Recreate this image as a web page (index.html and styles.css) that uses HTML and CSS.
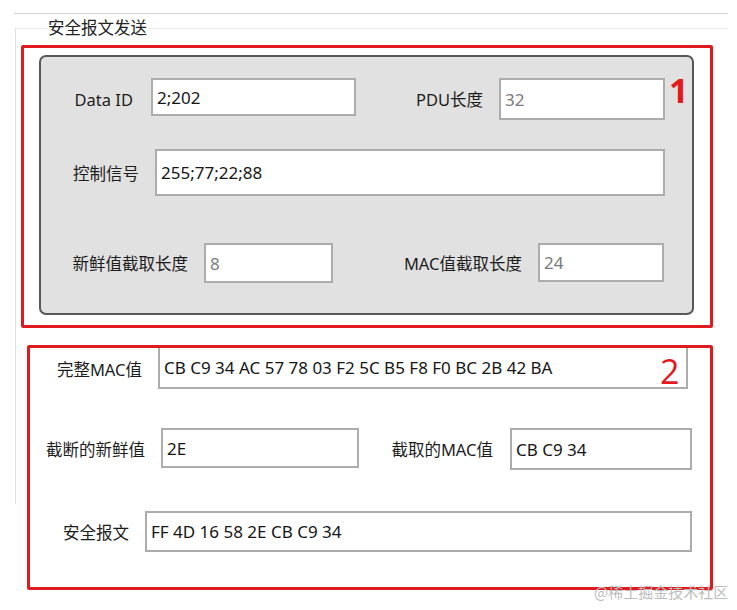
FILE: index.html
```html
<!DOCTYPE html>
<html lang="zh-CN">
<head>
<meta charset="utf-8">
<title>安全报文发送</title>
<link rel="stylesheet" href="styles.css">
</head>
<body>
<div class="topline"></div>
<div class="group">
  <div class="group-title">安全报文发送</div>
  <div class="redbox box1">
    <div class="panel">
      <div class="row r1">
        <div class="lbl w-dataid">Data ID</div>
        <div class="tb tb-dataid">2;202</div>
        <div class="lbl w-pdu">PDU长度</div>
        <div class="tb tb-pdu dim">32</div>
      </div>
      <div class="row r2">
        <div class="lbl w-ctrl">控制信号</div>
        <div class="tb tb-ctrl">255;77;22;88</div>
      </div>
      <div class="row r3">
        <div class="lbl w-fresh">新鲜值截取长度</div>
        <div class="tb tb-fresh dim">8</div>
        <div class="lbl w-maclen">MAC值截取长度</div>
        <div class="tb tb-maclen dim">24</div>
      </div>
    </div>
    <span class="mark mark1">1</span>
  </div>
  <div class="redbox box2">
    <div class="row ra">
      <div class="lbl w-fullmac">完整MAC值</div>
      <div class="tb tb-fullmac">CB C9 34 AC 57 78 03 F2 5C B5 F8 F0 BC 2B 42 BA</div>
    </div>
    <div class="row rb">
      <div class="lbl w-trfresh">截断的新鲜值</div>
      <div class="tb tb-trfresh">2E</div>
      <div class="lbl w-trmac">截取的MAC值</div>
      <div class="tb tb-trmac">CB C9 34</div>
    </div>
    <div class="row rc">
      <div class="lbl w-secmsg">安全报文</div>
      <div class="tb tb-secmsg">FF 4D 16 58 2E CB C9 34</div>
    </div>
    <span class="mark mark2">2</span>
  </div>
</div>
<div class="watermark">@稀土掘金技术社区</div>
</body>
</html>
```
FILE: styles.css
```css
* { box-sizing: border-box; }
html, body { margin: 0; padding: 0; background: #ffffff; }
body {
  width: 737px;
  height: 610px;
  position: relative;
  overflow: hidden;
  font-family: "Noto Sans", "Noto Sans CJK SC", sans-serif;
  font-size: 16px;
  color: #1a1a1a;
}
.topline {
  margin: 13px 0 0 14px;
  width: 714px;
  height: 1px;
  background: #d2d2d2;
}
.group {
  margin: 14px 0 0 15px;
  width: 713px;
  height: 476px;
  border-top: 1px solid #ebebeb;
  border-left: 1px solid #e0e0e0;
}
.group-title {
  display: block;
  width: max-content;
  margin: -11px 0 0 31px;
  padding: 0 1px;
  height: 18px;
  line-height: 18px;
  background: #fff;
  font-family: "Noto Sans CJK SC", sans-serif;
  font-size: 16.5px;
  color: #222;
}
.group-title + .redbox { margin-top: 9px; }
.redbox {
  position: relative;
  border: 3px solid #e01b1f;
  border-radius: 2px;
}
.box1 {
  margin: 8px 0 0 5px;
  width: 692px;
  height: 283px;
}
.box2 {
  margin: 17px 0 0 11px;
  width: 686px;
  height: 245px;
  background: #fff;
}
.panel {
  margin: 7px 0 0 15px;
  width: 655px;
  height: 260px;
  padding-top: 21px;
  background: #e1e1e1;
  border: 2px solid #585858;
  border-radius: 7px;
}
.row {
  display: flex;
  align-items: flex-start;
}
.r2 { margin-top: 29px; }
.r3 { margin-top: 47px; }
.rb { margin-top: 39px; }
.rc { margin-top: 41px; }
.lbl {
  align-self: stretch;
  display: flex;
  align-items: center;
  justify-content: flex-end;
  padding-right: 16px;
  white-space: nowrap;
  font-size: 16.5px;
  color: #1c1c1c;
}
.tb {
  display: flex;
  align-items: center;
  padding-left: 4px;
  background: #fff;
  border: 2px solid #acacac;
  white-space: nowrap;
  overflow: hidden;
  font-size: 17px;
  color: #151515;
}
.tb.dim { color: #7a7a7a; }

.w-dataid { width: 110px; padding-right: 18px; }
.tb-dataid { width: 205px; height: 38px; }
.w-pdu { width: 143px; }
.tb-pdu { width: 166px; height: 42px; }
.w-ctrl { width: 114px; }
.tb-ctrl { width: 510px; height: 47px; }
.w-fresh { width: 163px; }
.tb-fresh { width: 129px; height: 40px; }
.w-maclen { width: 205px; }
.tb-maclen { width: 126px; height: 39px; }

.w-fullmac { width: 128px; }
.tb-fullmac { width: 530px; height: 41px; border-top: none; }
.w-trfresh { width: 131px; }
.tb-trfresh { width: 198px; height: 40px; }
.w-trmac { width: 151px; padding-right: 17px; }
.tb-trmac { width: 182px; height: 42px; }
.w-secmsg { width: 115px; }
.tb-secmsg { width: 547px; height: 41px; }

.mark {
  position: absolute;
  color: #e3191e;
  font-family: "Open Sans", sans-serif;
  line-height: 1;
}
.mark1 {
  left: 645px;
  top: 25px;
  font-size: 34px;
  font-weight: 700;
}
.mark2 {
  left: 630px;
  top: 6px;
  font-size: 34px;
  font-weight: 400;
}
.watermark {
  position: absolute;
  left: 594px;
  top: 583px;
  font-family: "Noto Sans CJK SC", sans-serif;
  font-size: 15px;
  line-height: 18px;
  color: #bdbdbd;
}
```
